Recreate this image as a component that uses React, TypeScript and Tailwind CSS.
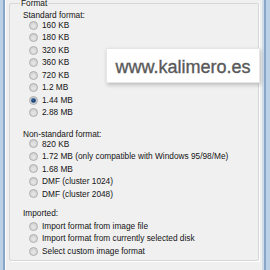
import React from "react";

function Radio({ checked = false }: { checked?: boolean }) {
  return (
    <svg width="9" height="9" viewBox="0 0 9 9" className="shrink-0">
      <defs>
        <radialGradient id="rg" cx="50%" cy="60%" r="60%">
          <stop offset="0%" stopColor="#e8e8e8" />
          <stop offset="70%" stopColor="#d6d6d6" />
          <stop offset="100%" stopColor="#cacaca" />
        </radialGradient>
        <radialGradient id="dot" cx="45%" cy="40%" r="60%">
          <stop offset="0%" stopColor="#3b6aa3" />
          <stop offset="100%" stopColor="#0f2d57" />
        </radialGradient>
      </defs>
      <circle cx="4.5" cy="4.5" r="4" fill="url(#rg)" stroke="#acacac" strokeWidth="0.9" />
      {checked && (
        <>
          <circle cx="4.5" cy="4.5" r="2.7" fill="#7c9cc4" />
          <circle cx="4.5" cy="4.5" r="2.1" fill="url(#dot)" />
        </>
      )}
    </svg>
  );
}

function Row({ label, checked = false }: { label: string; checked?: boolean }) {
  return (
    <div className="flex items-center h-[12.5px] pl-[19px] gap-[4px] whitespace-nowrap">
      <Radio checked={checked} />
      <span className="leading-none">{label}</span>
    </div>
  );
}

export default function App() {
  return (
    <div className="w-[270px] h-[270px] bg-[#f0f0f0] flex overflow-hidden relative font-['Liberation_Sans',Arial,sans-serif] text-[8.3px] text-[#141414]">
      {/* left window frame */}
      <div className="flex h-full shrink-0">
        <div className="w-[3px] h-full bg-[#bcd0e7]" />
        <div className="w-[2px] h-full bg-[#8aa6c9]" />
        <div className="w-[1px] h-full bg-[#fbfcfe]" />
      </div>

      <div className="flex-1 pl-[3px] pr-[3px] pt-[3px]">
        <div className="relative border border-[#d6d6d6] rounded-[2px] shadow-[1px_1px_0_#ffffff] h-[258px]">
          <div className="absolute -top-[5px] left-[10px] px-[1px] bg-[#f0f0f0] leading-[9px]">
            Format
          </div>

          <div className="flex flex-col">
            <div className="h-[10px] mt-[6px] pl-[13px] flex items-center leading-none">Standard format:</div>
            <div className="flex flex-col -mt-[1.25px]">
              <Row label="160 KB" />
              <Row label="180 KB" />
              <Row label="320 KB" />
              <Row label="360 KB" />
              <Row label="720 KB" />
              <Row label="1.2 MB" />
              <Row label="1.44 MB" checked />
              <Row label="2.88 MB" />
            </div>

            <div className="h-[10px] mt-[10.25px] pl-[13px] flex items-center leading-none">Non-standard format:</div>
            <div className="flex flex-col -mt-[1.5px]">
              <Row label="820 KB" />
              <Row label="1.72 MB (only compatible with Windows 95/98/Me)" />
              <Row label="1.68 MB" />
              <Row label="DMF (cluster 1024)" />
              <Row label="DMF (cluster 2048)" />
            </div>

            <div className="h-[10px] mt-[8.5px] pl-[13px] flex items-center leading-none">Imported:</div>
            <div className="flex flex-col mt-[1.25px]">
              <Row label="Import format from image file" />
              <Row label="Import format from currently selected disk" />
              <Row label="Select custom image format" />
            </div>
          </div>
        </div>
      </div>

      {/* right window frame */}
      <div className="flex h-full shrink-0">
        <div className="w-[2px] h-full bg-[#cfdcea]" />
        <div className="w-[2px] h-full bg-[#8aa6c9]" />
        <div className="w-[4px] h-full bg-[#bcd0e7]" />
      </div>

      {/* watermark banner */}
      <div className="absolute left-[106px] top-[48px] w-[154px] h-[35px] bg-white shadow-[1px_2px_4px_rgba(0,0,0,0.22)] border border-[#e6e6e6] flex items-center justify-center pt-[2px]">
        <span className="text-[18px] text-[#595959] leading-none [-webkit-text-stroke:0.35px_#595959]">www.kalimero.es</span>
      </div>
    </div>
  );
}
